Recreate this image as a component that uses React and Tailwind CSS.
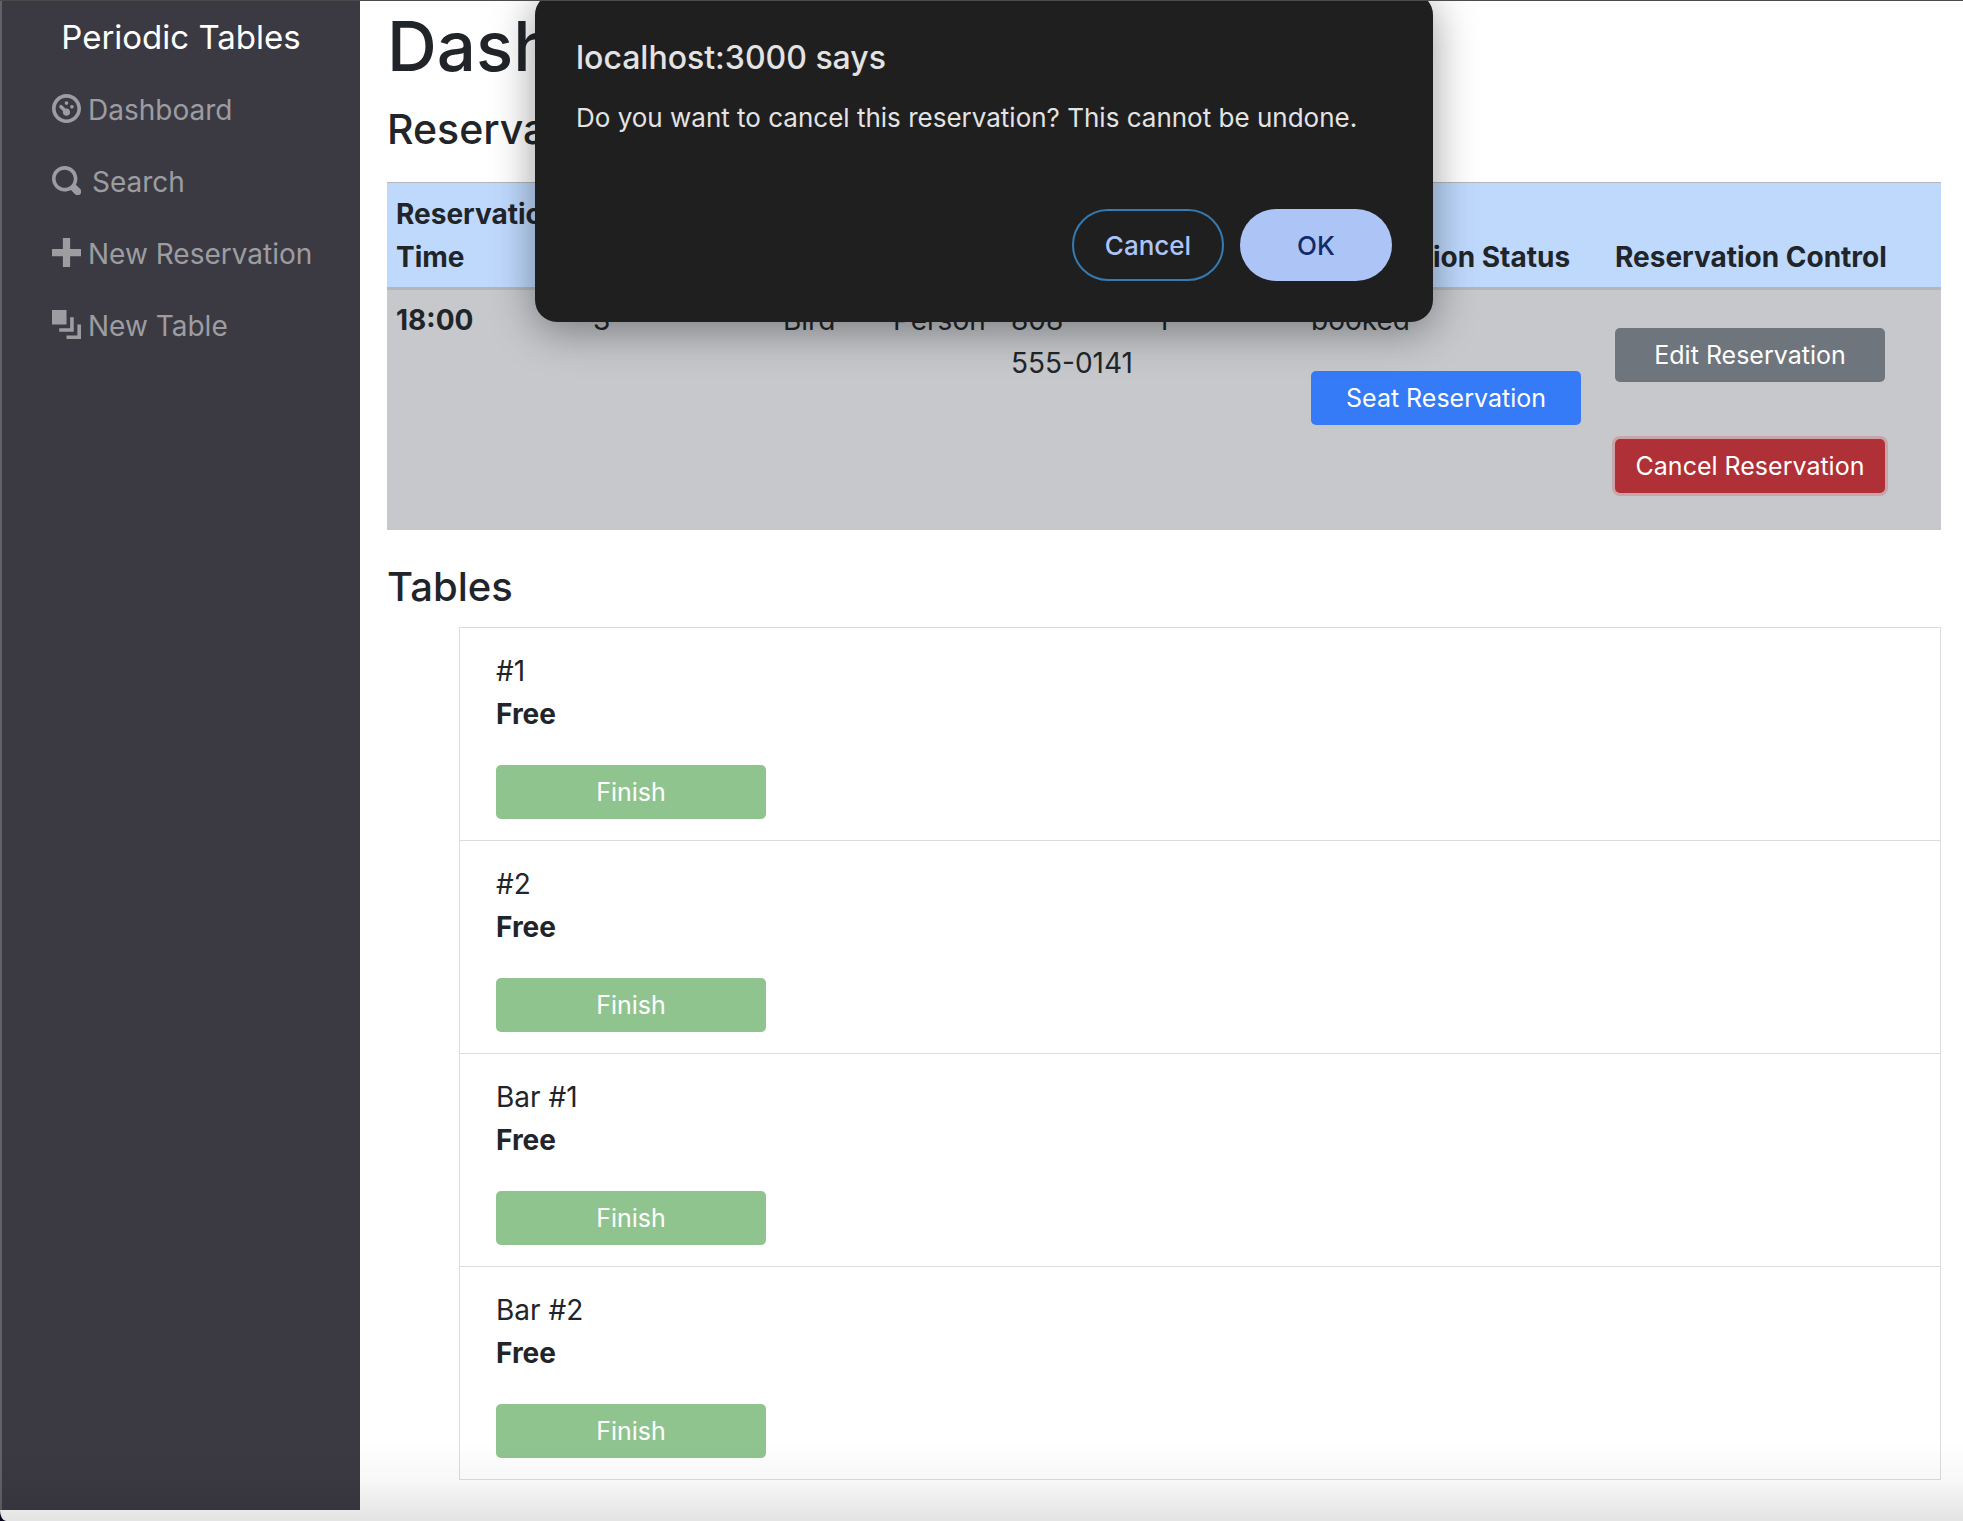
const navItems = [
  {
    label: "Dashboard",
    gap: "gap-[7px]",
    d: "M4 0c-2.2 0-4 1.8-4 4s1.8 4 4 4 4-1.8 4-4-1.8-4-4-4zm0 1c1.66 0 3 1.34 3 3s-1.34 3-3 3-3-1.34-3-3 1.34-3 3-3zm0 1c-.28 0-.5.22-.5.5s.22.5.5.5.5-.22.5-.5-.22-.5-.5-.5zm-1.66 1a.5.5 0 0 0-.19.84l.91.91c-.02.08-.06.16-.06.25 0 .55.45 1 1 1s1-.45 1-1-.45-1-1-1c-.09 0-.17.04-.25.06l-.91-.91a.5.5 0 0 0-.44-.16.5.5 0 0 0-.06 0zm3.16 0c-.28 0-.5.22-.5.5s.22.5.5.5.5-.22.5-.5-.22-.5-.5-.5z",
  },
  {
    label: "Search",
    gap: "gap-[11px]",
    d: "M3.5 0c-1.93 0-3.5 1.57-3.5 3.5s1.57 3.5 3.5 3.5c.59 0 1.17-.14 1.66-.41a1 1 0 0 0 .13.13l1 1a1.02 1.02 0 1 0 1.44-1.44l-1-1a1 1 0 0 0-.16-.13c.27-.49.44-1.06.44-1.66 0-1.93-1.55-3.5-3.5-3.5zm0 1c1.39 0 2.5 1.11 2.5 2.5 0 .66-.24 1.27-.66 1.72-.01.01-.02.02-.03.03a1 1 0 0 0-.13.13c-.44.4-1.04.63-1.69.63-1.39 0-2.5-1.11-2.5-2.5s1.11-2.5 2.5-2.5z",
  },
  { label: "New Reservation", gap: "gap-[7px]", d: "M3 0v3h-3v2h3v3h2v-3h3v-2h-3v-3h-2z" },
  {
    label: "New Table",
    gap: "gap-[7px]",
    d: "M0 0v4h4v-4h-4zm5 2v3h-3v1h4v-4h-1zm2 2v3h-3v1h4v-4h-1z",
  },
];

const tables = ["#1", "#2", "Bar #1", "Bar #2"];

const headings = [
  "Reservation Time",
  "Reservation ID",
  "First Name",
  "Last Name",
  "Mobile Number",
  "Party Size",
  "Reservation Status",
  "Reservation Control",
];

function Sidebar() {
  return (
    <nav className="mb-[11px] w-[360px] shrink-0 border-l-2 border-[#62616a] bg-[#3b3a43]">
      <a href="#home" className="flex h-[74px] items-center justify-center text-[33px] text-white">
        Periodic Tables
      </a>
      <ul className="pl-[50px]">
        {navItems.map((item) => (
          <li key={item.label}>
            <a href="#nav" className={`flex h-[72px] items-center text-[#9d9da1] ${item.gap}`}>
              <svg viewBox="0 0 8 8" className="mb-1 size-[29px] fill-current" aria-hidden="true">
                <path d={item.d} />
              </svg>
              {item.label}
            </a>
          </li>
        ))}
      </ul>
    </nav>
  );
}

function ActionButton({ className, children, ...rest }) {
  return (
    <button
      type="button"
      className={`block h-[54px] w-[270px] rounded-[5px] text-[25px] whitespace-nowrap text-white ${className}`}
      {...rest}
    >
      {children}
    </button>
  );
}

function Reservations() {
  return (
    <table className="w-full table-fixed border-collapse text-left">
      <colgroup>
        <col className="w-[197px]" />
        <col className="w-[190px]" />
        <col className="w-[110px]" />
        <col className="w-[118px]" />
        <col className="w-[146px]" />
        <col className="w-[154px]" />
        <col className="w-[304px]" />
        <col />
      </colgroup>
      <thead className="bg-[#bfd9fd]">
        <tr className="border-t border-b-3 border-t-[#b3b7bb] border-b-[#b3b7bb]">
          {headings.map((h) => (
            <th key={h} scope="col" className="px-[9px] pt-[10px] pb-2 align-bottom font-bold">
              {h}
            </th>
          ))}
        </tr>
      </thead>
      <tbody className="bg-[#c6c8cc]">
        <tr className="align-top">
          <th scope="row" className="px-[9px] pt-[9px] pb-2 font-bold">18:00</th>
          <td className="px-[9px] pt-[9px] pb-2">3</td>
          <td className="px-[9px] pt-[9px] pb-2">Bird</td>
          <td className="px-[9px] pt-[9px] pb-2">Person</td>
          <td className="px-[9px] pt-[9px] pb-2">808-555-0141</td>
          <td className="px-[9px] pt-[9px] pb-2">1</td>
          <td className="px-[9px] pt-[9px] pb-2">
            booked
            <ActionButton className="mt-[29px] bg-[#357af6]">Seat Reservation</ActionButton>
          </td>
          <td className="px-[9px] pt-[9px] pb-2">
            <ActionButton className="mt-[29px] bg-[#6e757c]">Edit Reservation</ActionButton>
            <ActionButton className="mt-[57px] mb-[29px] bg-[#b03037] ring-3 ring-[#c9a5aa]">
              Cancel Reservation
            </ActionButton>
          </td>
        </tr>
      </tbody>
    </table>
  );
}

function TableList() {
  return (
    <ul className="ml-[72px] border-x border-b border-[#dcdcdd]">
      {tables.map((name) => (
        <li key={name} className="border-t border-[#dcdcdd] px-9 pt-[22px] pb-[21px]">
          <p>{name}</p>
          <p className="font-bold">Free</p>
          <ActionButton className="mt-[29px] bg-[#8fc48f]" disabled>
            Finish
          </ActionButton>
        </li>
      ))}
    </ul>
  );
}

function ConfirmDialog() {
  return (
    <div
      role="dialog"
      aria-labelledby="confirm-title"
      className="absolute -top-[7px] left-[535px] w-[898px] rounded-[22px] bg-[#1f1f1f] px-[41px] pt-[45px] pb-[41px] text-[#e3e3e3] shadow-[0_8px_44px_rgba(0,0,0,0.4)]"
    >
      <h2 id="confirm-title" className="text-[32px] leading-10 font-medium">
        localhost:3000 says
      </h2>
      <p className="mt-5 text-[26px] leading-10">
        Do you want to cancel this reservation? This cannot be undone.
      </p>
      <div className="mt-[71px] flex justify-end gap-4 text-[26px] font-medium">
        <button
          type="button"
          className="h-[72px] w-[152px] rounded-full border-2 border-[#357bb2] text-[#adc5f6]"
        >
          Cancel
        </button>
        <button type="button" className="h-[72px] w-[152px] rounded-full bg-[#adc5f6] text-[#12296b]">
          OK
        </button>
      </div>
    </div>
  );
}

export default function App() {
  return (
    <div className="bg-[#08031a]">
      <div className="relative flex min-h-screen overflow-hidden rounded-bl-[6px_11px] bg-white font-['Inter','Liberation_Sans',sans-serif] text-[28px] leading-[43px] text-[#212529]">
        <Sidebar />
        <main className="min-w-0 flex-1 pr-[22px] pl-[27px]">
          <h1 className="pt-[3px] text-[69px] leading-[86px] font-medium">Dashboard</h1>
          <h2 className="mt-[14px] mb-[27px] text-[41px] leading-[52px] font-medium">Reservations</h2>
          <Reservations />
          <h2 className="mt-[31px] mb-[14px] text-[40px] leading-[52px] font-medium">Tables</h2>
          <TableList />
        </main>
        <ConfirmDialog />
        <div className="pointer-events-none absolute inset-x-0 top-0 h-px bg-[#4b4b4b]" />
        <div className="pointer-events-none absolute inset-x-0 bottom-0 h-20 bg-linear-to-b from-transparent via-black/3 to-black/11" />
      </div>
    </div>
  );
}
